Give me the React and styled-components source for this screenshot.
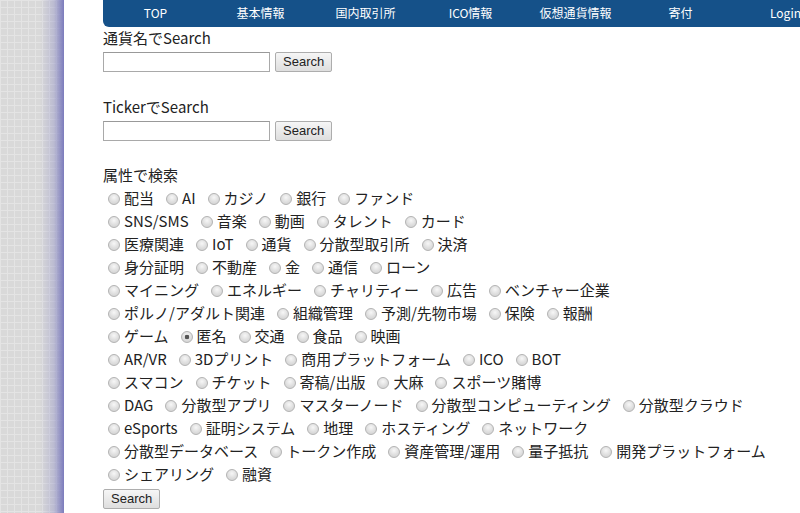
import React, { useState } from "react";
import styled, { createGlobalStyle } from "styled-components";

const GlobalStyle = createGlobalStyle`
    body {
        margin: 0;
        background: #fff;
        font-family: "Noto Sans CJK JP", "Open Sans", sans-serif;
        color: #222;
    }
`;

const navItems = ["TOP", "基本情報", "国内取引所", "ICO情報", "仮想通貨情報", "寄付", "Login"];

const tagRows = [
    ["配当", "AI", "カジノ", "銀行", "ファンド"],
    ["SNS/SMS", "音楽", "動画", "タレント", "カード"],
    ["医療関連", "IoT", "通貨", "分散型取引所", "決済"],
    ["身分証明", "不動産", "金", "通信", "ローン"],
    ["マイニング", "エネルギー", "チャリティー", "広告", "ベンチャー企業"],
    ["ポルノ/アダルト関連", "組織管理", "予測/先物市場", "保険", "報酬"],
    ["ゲーム", "匿名", "交通", "食品", "映画"],
    ["AR/VR", "3Dプリント", "商用プラットフォーム", "ICO", "BOT"],
    ["スマコン", "チケット", "寄稿/出版", "大麻", "スポーツ賭博"],
    ["DAG", "分散型アプリ", "マスターノード", "分散型コンピューティング", "分散型クラウド"],
    ["eSports", "証明システム", "地理", "ホスティング", "ネットワーク"],
    ["分散型データベース", "トークン作成", "資産管理/運用", "量子抵抗", "開発プラットフォーム"],
    ["シェアリング", "融資"],
];

const App = () => {
    const [tag, setTag] = useState("匿名");

    return (
        <Page>
            <GlobalStyle />
            <Side />
            <Main>
                <Nav>
                    {navItems.map((item) => (
                        <NavItem key={item}>{item}</NavItem>
                    ))}
                </Nav>

                <Heading>通貨名でSearch</Heading>
                <SearchRow>
                    <TextInput type="text" />
                    <Button>Search</Button>
                </SearchRow>
                <Spacer $h={23} />

                <Heading>TickerでSearch</Heading>
                <SearchRow>
                    <TextInput type="text" />
                    <Button>Search</Button>
                </SearchRow>
                <Spacer $h={22} />

                <Heading>属性で検索</Heading>
                {tagRows.map((row, i) => (
                    <TagRow key={i}>
                        {row.map((name) => (
                            <Tag key={name}>
                                <Radio
                                    type="radio"
                                    name="tag"
                                    checked={tag === name}
                                    onChange={() => setTag(name)}
                                />
                                {name}
                            </Tag>
                        ))}
                    </TagRow>
                ))}
                <Button>Search</Button>
            </Main>
        </Page>
    );
};

const Page = styled.div`
    display: flex;
    min-height: 100vh;
`;

const Side = styled.div`
    flex: 0 0 64px;
    background:
        linear-gradient(to right, rgba(122, 122, 190, 0) 0, rgba(122, 122, 190, 0) 40px, rgba(150, 150, 200, 0.45) 54px, #7c7cbc 64px),
        repeating-linear-gradient(to right, #e4e4e4 0 1px, transparent 1px 7px),
        repeating-linear-gradient(to bottom, #e4e4e4 0 1px, transparent 1px 7px),
        #d9d9d9;
`;

const Main = styled.div`
    flex: 1;
    min-width: 0;
    padding-left: 39px;
    overflow: hidden;
    font-size: 15px;
    line-height: 21px;
`;

const Nav = styled.div`
    display: flex;
    width: 735px;
    height: 27px;
    background: #155189;
    border-bottom-left-radius: 6px;
`;

const NavItem = styled.div`
    flex: 0 0 105px;
    text-align: center;
    color: #fff;
    font-size: 12px;
    line-height: 26px;
`;

const Heading = styled.div`
    height: 23px;
`;

const SearchRow = styled.div`
    display: flex;
    align-items: center;
    gap: 5px;
    height: 23px;
`;

const Spacer = styled.div`
    height: ${(p) => p.$h}px;
`;

const TextInput = styled.input`
    box-sizing: border-box;
    width: 167px;
    height: 20px;
    margin: 0;
    border: 1px solid #a9a9a9;
    border-top-color: #999;
    padding: 0 3px;
    font-size: 13px;
`;

const Button = styled.button`
    box-sizing: border-box;
    height: 20px;
    padding: 0 7px;
    margin: 0;
    border: 1px solid #adadad;
    border-radius: 2px;
    background: linear-gradient(#f6f6f6, #dedede);
    font-family: "Liberation Sans", Arial, sans-serif;
    font-size: 13px;
    color: #222;
    line-height: 18px;
`;

const TagRow = styled.div`
    display: flex;
    gap: 7px;
    box-sizing: border-box;
    height: 23px;
    padding-bottom: 2px;
    align-items: center;
    white-space: nowrap;
`;

const Tag = styled.label`
    display: flex;
    align-items: center;
`;

const Radio = styled.input`
    appearance: none;
    box-sizing: border-box;
    width: 12px;
    height: 12px;
    margin: 2px 4px 0 5px;
    border-radius: 50%;
    border: 1px solid #b3b3b3;
    background: radial-gradient(circle at 50% 35%, #f7f7f7 0, #dedede 55%, #cfcfcf 100%);
    &:checked {
        background:
            radial-gradient(circle, #555 0 2px, transparent 2.6px),
            radial-gradient(circle at 50% 35%, #f7f7f7 0, #dedede 55%, #cfcfcf 100%);
    }
`;

export default App;
